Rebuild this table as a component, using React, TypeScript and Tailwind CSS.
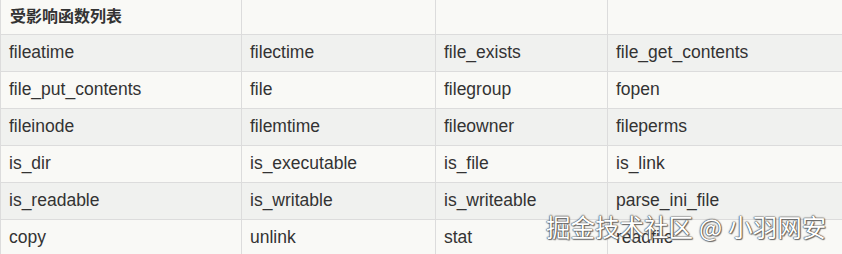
import React from 'react';

const rows: string[][] = [
  ['fileatime', 'filectime', 'file_exists', 'file_get_contents'],
  ['file_put_contents', 'file', 'filegroup', 'fopen'],
  ['fileinode', 'filemtime', 'fileowner', 'fileperms'],
  ['is_dir', 'is_executable', 'is_file', 'is_link'],
  ['is_readable', 'is_writable', 'is_writeable', 'parse_ini_file'],
  ['copy', 'unlink', 'stat', 'readfile'],
];

const widths = ['w-[241px]', 'w-[194px]', 'w-[172px]', 'w-[235px]'];

export default function App() {
  return (
    <div className="relative w-[842px] h-[254px] overflow-hidden bg-[#f9f9f6] font-['Liberation_Sans','Noto_Sans_CJK_SC',sans-serif] text-[#333]">
      <table className="w-[842px] border-collapse table-fixed">
        <thead>
          <tr className="h-[34px] bg-[#f9f9f6]">
            <th className={`${widths[0]} border border-[#dcdcdc] border-t-0 px-[9px] text-left text-[16px] font-bold`}>
              受影响函数列表
            </th>
            <th className={`${widths[1]} border border-[#dcdcdc] border-t-0`}></th>
            <th className={`${widths[2]} border border-[#dcdcdc] border-t-0`}></th>
            <th className={`${widths[3]} border border-[#dcdcdc] border-t-0 border-r-0`}></th>
          </tr>
        </thead>
        <tbody>
          {rows.map((row, i) => (
            <tr key={i} className={`h-[37px] ${i % 2 === 0 ? 'bg-[#f0f1ef]' : 'bg-[#f9f9f6]'}`}>
              {row.map((cell, j) => (
                <td
                  key={j}
                  className={`border border-[#dcdcdc] px-[8px] text-[17.5px] leading-none ${j === 3 ? 'border-r-0' : ''} ${i === rows.length - 1 ? 'border-b-0' : ''}`}
                >
                  {cell}
                </td>
              ))}
            </tr>
          ))}
        </tbody>
      </table>
      <div className="h-[2px] bg-[#2b2b2b]"></div>

      {/* watermark */}
      <div className="absolute left-[546px] top-[215px] flex items-center gap-[6px] text-[24.5px] leading-none text-white font-['Noto_Sans_CJK_SC',sans-serif] [text-shadow:0_0_1px_#444,0_0_1px_#444,0_0_2px_#666,1px_1px_1px_#777]">
        <span>掘金技术社区</span>
        <span>@</span>
        <span>小羽网安</span>
      </div>
    </div>
  );
}
